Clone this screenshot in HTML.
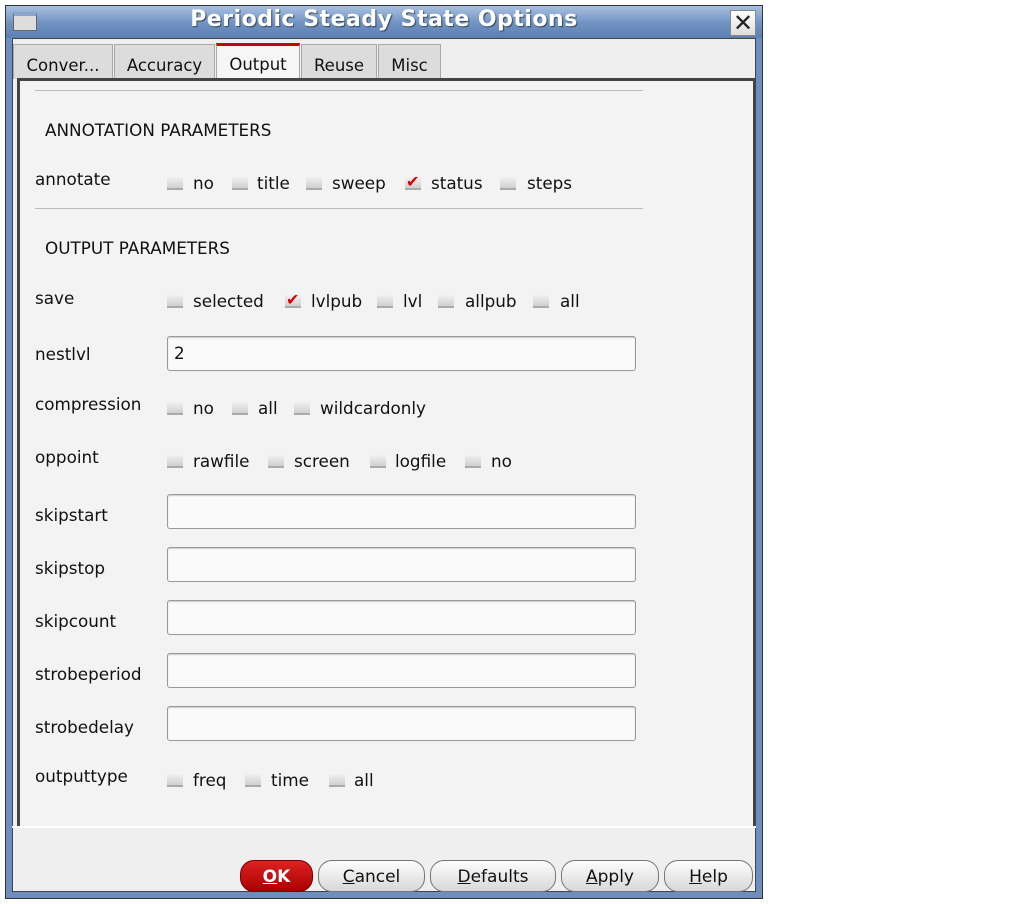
<!DOCTYPE html><html><head><style>
*{margin:0;padding:0;box-sizing:border-box}
body{width:1013px;height:904px;background:#fff;font-family:"DejaVu Sans","Liberation Sans",sans-serif;font-size:16.8px;color:#111;position:relative;overflow:hidden}
.a{position:absolute}
.win{left:5px;top:5px;width:758px;height:894px;background:#6d8fbd;border:1px solid #333}
.title{left:6px;top:6px;width:756px;height:32px;background:linear-gradient(#a8c0e0,#6f92c2 55%,#5c80b2)}
.body{left:12px;top:38px;width:744px;height:854px;background:#efefef;border:1px solid #444}
.tab{top:44px;height:35px;background:#dcdcdc;border:1px solid #aaa;border-bottom:none;text-align:center;line-height:42px;font-size:16.5px}
.panel{left:17px;top:78px;width:738px;height:748px;background:#f3f3f3;border-left:3px solid #444;border-top:3px solid #444;border-right:2px solid #444}
.sep{left:35px;width:608px;height:1px;background:#bbb}
.lbl{left:35px}
.cb{width:16px;height:14px;background:linear-gradient(#f4f4f4,#cfcfcf);border-bottom:2px solid #aaa}
.ck{color:#d00;font-size:16px;font-weight:bold;line-height:16px}
.tf{left:167px;width:469px;height:35px;background:#fafafa;border:1px solid #999;border-radius:3px;box-shadow:inset 0 1px 1px #ccc;padding-left:6px;line-height:33px}
.btn{top:860px;height:32px;border:1px solid #777;border-radius:14px;background:linear-gradient(#fdfdfd,#d8d8d8);text-align:center;line-height:32px;font-size:17px}
.btn u{text-decoration:underline}
</style></head><body>
<div class="a win"></div>
<div class="a title"></div>
<div class="a" style="left:13px;top:12px;width:24px;height:19px;background:#ddd;border:1px solid #666;border-top:4px solid #8aa6cc"></div>
<div class="a" style="left:0;top:7px;width:768px;text-align:center;font-weight:bold;font-size:22px;color:#fff;text-shadow:1px 1px 1px #345;letter-spacing:.5px">Periodic Steady State Options</div>
<div class="a" style="left:730px;top:10px;width:26px;height:26px;background:linear-gradient(#fff,#ddd);border:1px solid #888;text-align:center;font-size:24px;line-height:24px;font-weight:bold;color:#222">✕</div>
<div class="a body"></div>
<div class="a tab" style="left:13px;width:100px">Conver...</div>
<div class="a tab" style="left:114px;width:101px">Accuracy</div>
<div class="a tab" style="left:216px;width:84px;background:#f6f6f6;border-top:3px solid #c00;line-height:38px;height:36px;top:43px">Output</div>
<div class="a tab" style="left:301px;width:76px">Reuse</div>
<div class="a tab" style="left:378px;width:63px">Misc</div>
<div class="a panel"></div>
<div class="a" style="left:12px;top:826px;width:744px;height:2px;background:#fff"></div>
<div class="a sep" style="top:90px"></div>
<div class="a sep" style="top:208px"></div>
<div class="a" style="left:45px;top:120px">ANNOTATION PARAMETERS</div>
<div class="a" style="left:45px;top:238px">OUTPUT PARAMETERS</div>

<div class="a lbl" style="top:169px">annotate</div>
<div class="a lbl" style="top:288px">save</div>
<div class="a lbl" style="top:344px">nestlvl</div>
<div class="a lbl" style="top:394px">compression</div>
<div class="a lbl" style="top:447px">oppoint</div>
<div class="a lbl" style="top:505px">skipstart</div>
<div class="a lbl" style="top:558px">skipstop</div>
<div class="a lbl" style="top:611px">skipcount</div>
<div class="a lbl" style="top:664px">strobeperiod</div>
<div class="a lbl" style="top:717px">strobedelay</div>
<div class="a lbl" style="top:766px">outputtype</div>

<div class="a cb" style="left:167px;top:176px"></div><div class="a" style="left:193px;top:173px">no</div>
<div class="a cb" style="left:232px;top:176px"></div><div class="a" style="left:257px;top:173px">title</div>
<div class="a cb" style="left:306px;top:176px"></div><div class="a" style="left:332px;top:173px">sweep</div>
<div class="a cb" style="left:405px;top:176px"></div><div class="a ck" style="left:406px;top:174px">✔</div><div class="a" style="left:431px;top:173px">status</div>
<div class="a cb" style="left:500px;top:176px"></div><div class="a" style="left:527px;top:173px">steps</div>

<div class="a cb" style="left:167px;top:294px"></div><div class="a" style="left:193px;top:291px">selected</div>
<div class="a cb" style="left:285px;top:294px"></div><div class="a ck" style="left:286px;top:292px">✔</div><div class="a" style="left:311px;top:291px">lvlpub</div>
<div class="a cb" style="left:377px;top:294px"></div><div class="a" style="left:403px;top:291px">lvl</div>
<div class="a cb" style="left:438px;top:294px"></div><div class="a" style="left:465px;top:291px">allpub</div>
<div class="a cb" style="left:533px;top:294px"></div><div class="a" style="left:560px;top:291px">all</div>

<div class="a tf" style="top:336px">2</div>

<div class="a cb" style="left:167px;top:401px"></div><div class="a" style="left:193px;top:398px">no</div>
<div class="a cb" style="left:232px;top:401px"></div><div class="a" style="left:258px;top:398px">all</div>
<div class="a cb" style="left:294px;top:401px"></div><div class="a" style="left:320px;top:398px">wildcardonly</div>

<div class="a cb" style="left:167px;top:454px"></div><div class="a" style="left:193px;top:451px">rawfile</div>
<div class="a cb" style="left:268px;top:454px"></div><div class="a" style="left:294px;top:451px">screen</div>
<div class="a cb" style="left:370px;top:454px"></div><div class="a" style="left:395px;top:451px">logfile</div>
<div class="a cb" style="left:465px;top:454px"></div><div class="a" style="left:491px;top:451px">no</div>

<div class="a tf" style="top:494px"></div>
<div class="a tf" style="top:547px"></div>
<div class="a tf" style="top:600px"></div>
<div class="a tf" style="top:653px"></div>
<div class="a tf" style="top:706px"></div>

<div class="a cb" style="left:167px;top:773px"></div><div class="a" style="left:193px;top:770px">freq</div>
<div class="a cb" style="left:245px;top:773px"></div><div class="a" style="left:271px;top:770px">time</div>
<div class="a cb" style="left:329px;top:773px"></div><div class="a" style="left:354px;top:770px">all</div>

<div class="a btn" style="left:240px;width:73px;background:linear-gradient(#d22,#a00);border-color:#700;color:#fff;font-weight:bold"><u>O</u>K</div>
<div class="a btn" style="left:318px;width:107px"><u>C</u>ancel</div>
<div class="a btn" style="left:430px;width:126px"><u>D</u>efaults</div>
<div class="a btn" style="left:561px;width:98px"><u>A</u>pply</div>
<div class="a btn" style="left:664px;width:89px"><u>H</u>elp</div>
</body></html>
